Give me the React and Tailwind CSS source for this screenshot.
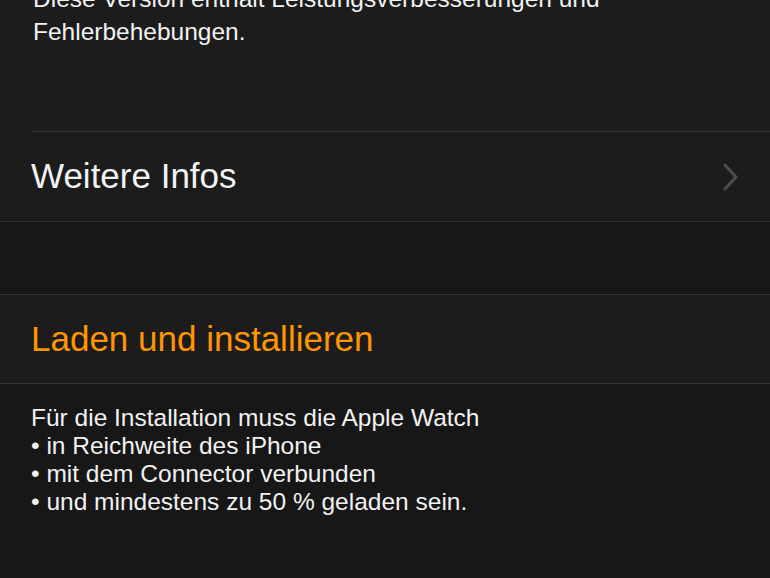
const footerLines = [
  'Für die Installation muss die Apple Watch',
  '• in Reichweite des iPhone',
  '• mit dem Connector verbunden',
  '• und mindestens zu 50 % geladen sein.',
];

function Chevron() {
  return (
    <svg width="18" height="28" viewBox="0 0 18 28" fill="none" className="shrink-0">
      <path d="M3 2 L14 14 L3 26" stroke="#4d4d4d" strokeWidth="3" strokeLinecap="round" strokeLinejoin="round" />
    </svg>
  );
}

export default function App() {
  return (
    <div
      className="w-[770px] h-[578px] overflow-hidden bg-[#171717] text-[#f2f2f2]"
      style={{ fontFamily: '"Liberation Sans", Arial, sans-serif' }}
    >
      {/* release notes + Weitere Infos */}
      <section className="bg-[#1c1c1c] border-b border-[#333333]">
        <div className="pl-[33px] pb-[83px]">
          <p className="-mt-[18px] text-[24.5px] leading-[33px]">
            Diese Version enthält Leistungsverbesserungen und
            <br />
            Fehlerbehebungen.
          </p>
        </div>
        <div className="ml-[31px] border-t border-[#363636]">
          <div className="h-[89px] flex items-center justify-between pr-[30px]">
            <span className="text-[35px]">Weitere Infos</span>
            <Chevron />
          </div>
        </div>
      </section>

      <div className="h-[72px]" />

      <section className="bg-[#1c1c1c] border-y border-[#333333]">
        <div className="h-[88px] flex items-center pl-[31px]">
          <span className="text-[35px] text-[#ff9500]">Laden und installieren</span>
        </div>
      </section>

      <section className="pl-[31px] pt-[20px]">
        {footerLines.map((line, i) => (
          <p key={i} className="text-[24.5px] leading-[28px]">
            {line}
          </p>
        ))}
      </section>
    </div>
  );
}
